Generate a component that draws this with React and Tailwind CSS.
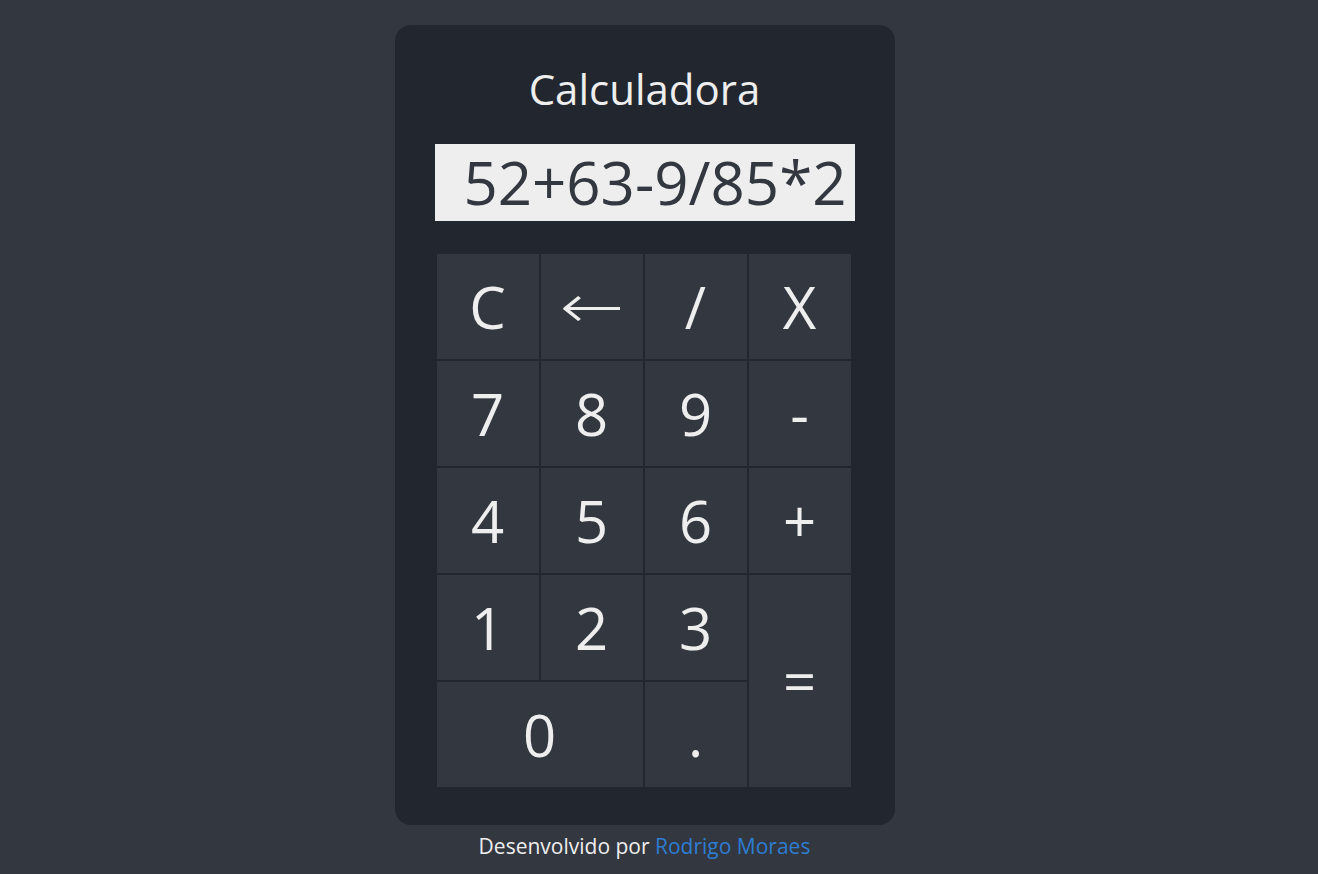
import { useState } from 'react'

const teclas = [
  { t: 'C', c: '' },
  { t: '←', c: 'font-[DejaVu_Sans] text-[62px] font-light scale-x-125' },
  { t: '/', c: '' },
  { t: 'X', c: '' },
  { t: '7', c: '' },
  { t: '8', c: '' },
  { t: '9', c: '' },
  { t: '-', c: '' },
  { t: '4', c: '' },
  { t: '5', c: '' },
  { t: '6', c: '' },
  { t: '+', c: '' },
  { t: '1', c: '' },
  { t: '2', c: '' },
  { t: '3', c: '' },
  { t: '=', c: 'row-span-2' },
  { t: '0', c: 'col-span-2' },
  { t: '.', c: '' },
]

export default function App() {
  const [visor] = useState('52+63-9/85*2')

  return (
    <div
      className="min-h-screen bg-[#333740] flex flex-col items-center pr-[29px]"
      style={{ fontFamily: '"Open Sans", "Liberation Sans", sans-serif' }}
    >
      <div className="mt-[25px] w-[500px] h-[800px] bg-[#22262f] rounded-[16px] flex flex-col">
        <h1 className="mt-[43px] text-center text-[42px] leading-none text-[#eeeeee] font-normal">
          Calculadora
        </h1>

        <div className="mt-[34px] mx-[40px] h-[77px] bg-[#eeeeee] flex items-center justify-end pr-[8px]">
          <span className="text-[60px] leading-[77px] text-[#333740] whitespace-nowrap">{visor}</span>
        </div>

        <div className="mt-[33px] ml-[42px] w-[414px] grid grid-cols-[repeat(4,102px)] grid-rows-[repeat(5,105px)] gap-[2px]">
          {teclas.map((k) => (
            <button
              key={k.t}
              className={`${k.t === '←' ? 'row-span-1' : k.c} bg-[#333740] text-[#eeeeee] text-[58px] leading-none flex items-center justify-center`}
            >
              {k.t === '←' ? <span className={k.c}>{k.t}</span> : k.t}
            </button>
          ))}
        </div>
      </div>

      <p className="mt-[5px] text-[21px] leading-[32px] text-[#eeeeee]">
        Desenvolvido por <a className="text-[#2d7dd2]" href="#">Rodrigo Moraes</a>
      </p>
    </div>
  )
}
